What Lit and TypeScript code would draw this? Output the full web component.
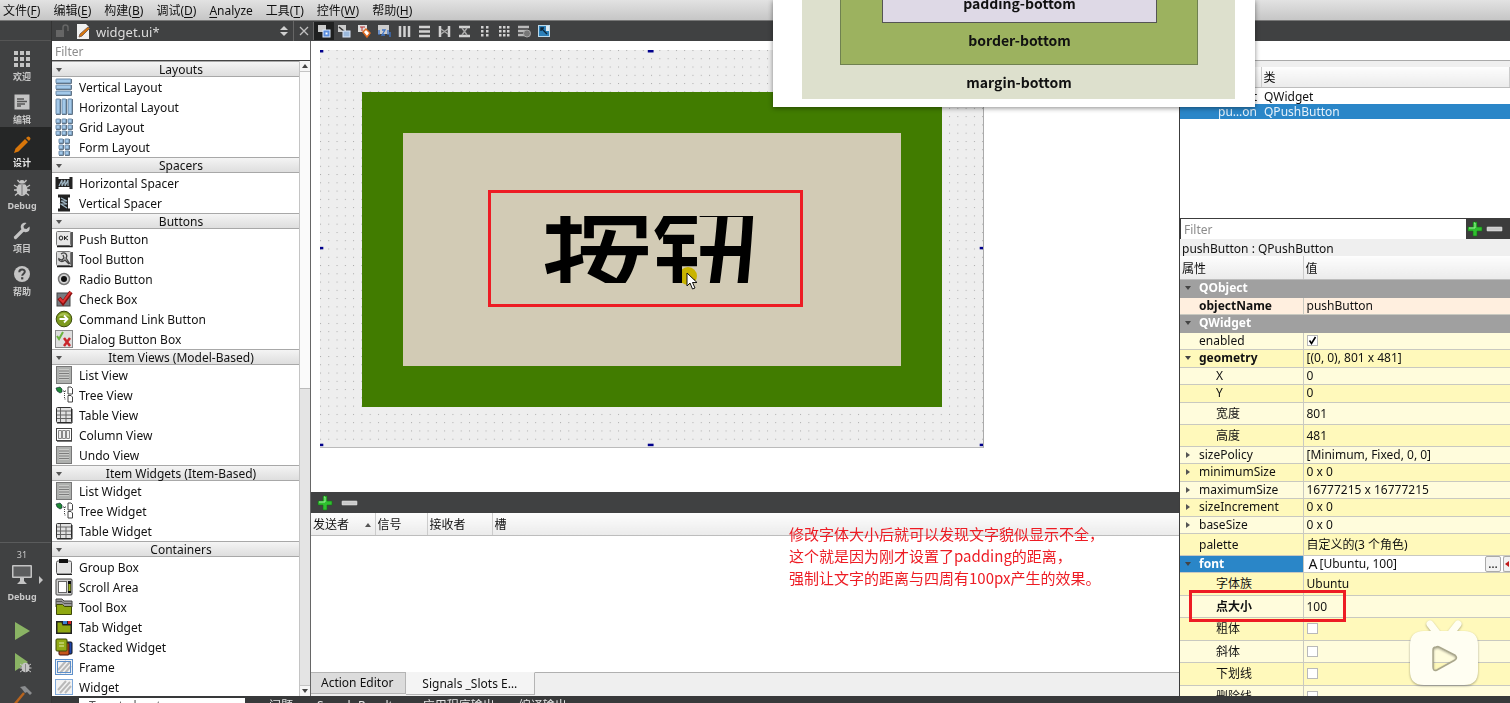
import { LitElement, html, css, svg, nothing, type TemplateResult } from "lit";
import { customElement, property } from "lit/decorators.js";
import { classMap } from "lit/directives/class-map.js";

/* ---------- icons ---------- */

const lines = svg`<path d="M4 5h10M4 7.5h10M4 10h10M4 12.500h10" stroke="#7c7c7c"/>`;
const treeIcon = svg`
  <path d="M1 2l4-1 2 2v3l-2 1-3-2z" fill="#1f8a35" stroke="#123" stroke-width=".6"/>
  <path d="M8 5h3M9.500 5v8h2" fill="none" stroke="#444" stroke-dasharray="1 1"/>
  <path d="M13 1h3l1.500 1.500V8H13zM13 9.500h3l1.500 1.500v5H13z" fill="#fff" stroke="#444"/>`;
const tableIcon = svg`
  <rect x="1.500" y="1.500" width="15" height="15" rx="1" fill="#e2e2e2" stroke="#333"/>
  <path d="M2 5h14M2 9h14M2 12.500h14M5.500 2v14M11 5v11" stroke="#666"/>
  <path d="M2 17h15V3" fill="none" stroke="#222"/>`;
const listIcon = svg`<rect x="1" y="0" width="16" height="18" fill="#aeb0ae"/><rect x="1.500" y=".5" width="15" height="17" fill="none" stroke="#777"/>
  <rect x="4" y="3" width="10" height="11" fill="#c9cac8"/>${lines}`;
const blueCell = (x: number, y: number, w: number, h: number) =>
  svg`<rect x=${x} y=${y} width=${w} height=${h} rx=".5" fill="#a4c9e9" stroke="#5f7f9f" stroke-width=".9"/>
    <path d=${`M${x} ${y + h + 0.5}h${w + 0.5}V${y}`} fill="none" stroke="#4b5f74" stroke-width=".8"/>`;
const hatch = (edge: string) => svg`
  <rect x=".5" y="1.500" width="17" height="15" fill="#f2f2f2" stroke=${edge}/>
  <path d="M3 12l8-9M5 15L15 4M10 15l6-7" stroke="#b9b9b9" stroke-width="2"/>`;

const ICONS: Record<string, unknown> = {
  vlayout: [blueCell(1, 1, 15, 4), blueCell(1, 7, 15, 4), blueCell(1, 13, 15, 4)],
  hlayout: [blueCell(1, 1, 4, 15), blueCell(7, 1, 4, 15), blueCell(13, 1, 4, 15)],
  grid: [1, 7, 13].map((y) => [1, 7, 13].map((x) => blueCell(x, y, 4, 4))),
  form: [1, 7, 13].map((y) => [4, 10].map((x) => blueCell(x, y, 4, 4))),
  hspacer: svg`<path d="M2 3v12M16 3v12" stroke="#222" stroke-width="3"/><rect x="3" y="5" width="12" height="8" fill="#222"/>
    <path d="M4 12l3-6v6l3-6v6l3-6v6" fill="none" stroke="#9fb6c4" stroke-width="1.200"/>`,
  vspacer: svg`<path d="M3 2h12M3 16h12" stroke="#222" stroke-width="3"/><path d="M5 3h8v12H5z" fill="#222"/>
    <path d="M6 4l6 3H6l6 3H6l6 4" fill="none" stroke="#9fb6c4" stroke-width="1.200"/>`,
  push: svg`<rect x="1.500" y="1.500" width="14" height="14" rx="1" fill="#e6e6e6" stroke="#777"/><path d="M2 16.500h15V2" fill="none" stroke="#222" stroke-width="1.500"/>
    <ellipse cx="6" cy="8" rx="1.800" ry="2" fill="none" stroke="#222"/><path d="M9.500 6v4M13 6l-3 2 3 2" fill="none" stroke="#222"/>`,
  tool: svg`<rect x="1.500" y="1.500" width="14" height="14" rx="1" fill="#dcdcdc" stroke="#777"/><path d="M2 16.500h15V2" fill="none" stroke="#222" stroke-width="1.500"/>
    <path d="M6 4c4-3 7 1 5 4l4 6M4 8c-1 3 3 5 6 2l4 4M8 5l1 3-2 2-3-1" fill="none" stroke="#444" stroke-width="1.300"/>`,
  radio: svg`<circle cx="9" cy="9" r="5.500" fill="#d6d6d6" stroke="#777" stroke-width="1.500"/><circle cx="9" cy="9" r="3" fill="#111"/>`,
  check: svg`<rect x="2" y="3" width="13" height="13" fill="#777b80" stroke="#444"/><path d="M4 8l4 5 8-11" fill="none" stroke="#8d1010" stroke-width="4"/><path d="M4.500 8.500L8 12l7.500-10" fill="none" stroke="#e23434" stroke-width="2"/>`,
  command: svg`<circle cx="9" cy="9" r="7.800" fill="#7d9b1e" stroke="#3d4d0c"/><path d="M3 7a6.500 6.500 0 0 1 12 0c-4-2-8-2-12 0z" fill="#a9c14f"/><path d="M4.500 9h8M9 5.500L12.500 9 9 12.500" fill="none" stroke="#fff" stroke-width="1.800"/>`,
  dialog: svg`<rect x=".5" y=".5" width="17" height="17" fill="#dedede" stroke="#8a8a8a"/><path d="M2 6l2 3 4-7" fill="none" stroke="#6cb33e" stroke-width="2"/><path d="M9 8l6 8M15 8l-6 8" stroke="#c9252b" stroke-width="2.500"/>`,
  list: listIcon,
  tree: treeIcon,
  table: tableIcon,
  column: svg`<rect x="1.500" y="2.500" width="15" height="12" fill="#fff" stroke="#444"/><path d="M3.500 4.500h3v8h-3zM7.500 4.500h3v8h-3zM11.500 4.500h3v8h-3z" fill="#eee" stroke="#888"/><path d="M2 15.500h15" stroke="#777"/>`,
  group: svg`<rect x="1.500" y="3" width="15" height="13" rx="1.500" fill="#e4e4e4" stroke="#555"/><path d="M2 16.500h15" stroke="#222"/><rect x="4" y="1" width="9" height="4" fill="#111"/>`,
  scroll: svg`<rect x="1" y="1" width="16" height="16" rx="1" fill="#cfcfcf" stroke="#444"/><rect x="3.500" y="3.500" width="8" height="11" fill="#fff" stroke="#666"/><rect x="13" y="3" width="3" height="12" fill="#111"/><rect x="13.500" y="6" width="2" height="7" fill="#9bb01c"/>`,
  toolbox: svg`<path d="M1 1h6l2 2h8v6H1z" fill="#999" stroke="#444"/><path d="M1 3.500h6l2 2h8" fill="none" stroke="#555"/><path d="M1.500 6.500h6l2 2h7v8h-15z" fill="#8fa811" stroke="#3d4807"/>`,
  tab: svg`<rect x="1" y="3" width="16" height="13" fill="#222"/><rect x="8" y="3" width="4" height="3" fill="#3f7fd0"/><rect x="13" y="3" width="3" height="3" fill="#d32020"/><path d="M2.500 4.500h4l1 3h8v7h-13z" fill="#8fa811"/>`,
  stacked: svg`<rect x="7" y="4" width="10" height="12" rx="1" fill="#1d46ac" stroke="#111"/><rect x="4" y="5" width="10" height="12" rx="1" fill="#c5561c" stroke="#411"/><rect x="1" y="1" width="11" height="12" rx="1" fill="#92aa17" stroke="#3d4807"/><path d="M4 5h5M4 8h5" stroke="#e2ebaa"/>`,
  frame: svg`${hatch("#5d8fca")}<rect x="2.500" y="3.500" width="13" height="11" fill="none" stroke="#5d8fca"/>`,
  widget: hatch("#7fa9da"),

  welcome: [1, 7, 13].map((y) => [1, 7, 13].map((x) => svg`<rect x=${x} y=${y} width="4" height="4" fill="#c4c4c4"/>`)),
  edit: svg`<rect x="1.500" y="1.500" width="15" height="15" fill="#c4c4c4"/><path d="M4 6h7M4 8.500h10M4 11h8M4 13h4" stroke="#555" stroke-width="1.400"/>`,
  design: svg`<path d="M1 17l1.500-4.500L12 3l3 3-9.500 9.500zM13 2l2-1.500c1.500 0 2.500 1 2.500 2.500L16 5z" fill="#d8760a"/>`,
  bug: svg`<ellipse cx="9" cy="10.500" rx="5.500" ry="6.500" fill="#c4c4c4"/><path d="M6 4a3 3 0 0 1 6 0z" fill="#c4c4c4"/>
    <path d="M6 3L4.500 1M12 3l1.500-2M4 8L1 6M14 8l3-2M4 11H1M14 11h3M5 14l-3 2.500M13 14l3 2.500" stroke="#c4c4c4" stroke-width="1.300"/><path d="M9 6v10M5 5h8" stroke="#606162" stroke-width=".8"/>`,
  wrench: svg`<path d="M2.500 15.500L10 8" stroke="#c4c4c4" stroke-width="3.200" stroke-linecap="round"/><path d="M16.500 4.500l-3 2.500-2.500-.5L10.500 4l3-3c-4-1-6.500 2-5.500 5.500l3.500 3.500c3.500 1 6-1.500 5-5.500z" fill="#c4c4c4"/>`,
  help: svg`<circle cx="9" cy="9" r="8" fill="#c4c4c4"/><path d="M6.300 7.200c0-3.500 5.500-3.500 5.500-.4 0 1.800-2.600 2-2.600 4" fill="none" stroke="#404142" stroke-width="2"/><rect x="8.100" y="12.200" width="2.200" height="2.200" fill="#404142"/>`,
  monitor: svg`<rect x="-1" y="0" width="20" height="13" rx="1" fill="#c4c4c4"/><rect x="0.500" y="1.500" width="17" height="10" fill="#5c5d5e"/><path d="M7 13h4v3l3 3H4l3-3z" fill="#c4c4c4"/>`,
  run: svg`<path d="M2 0v18l15-9z" fill="#8ab364"/>`,
  rundebug: svg`<path d="M2-1v18l6-4 7-5z" fill="#8ab364"/><ellipse cx="12.500" cy="13.500" rx="4" ry="4.800" fill="#c4c4c4"/><path d="M7 10l3 2M18 10l-3 2M6.500 14h12M7 18l3-2M18 18l-3-2" stroke="#c4c4c4"/><path d="M12.500 10v8" stroke="#777" stroke-width=".8"/>`,
  hammer: svg`<path d="M1 19L11 7" stroke="#b8641e" stroke-width="2.500"/><path d="M7 1l5-1 7 7-2 2-3-3-2 1-3-4z" fill="#8b8d8f"/>`,

  lock: svg`<rect x="2" y="8" width="8" height="7" fill="#666"/><path d="M9 8V5.500a2.500 2.500 0 0 1 5 0V9" fill="none" stroke="#666" stroke-width="1.500"/>`,
  doc: svg`<path d="M3 2h9l3 3v12H3z" fill="#f1f1f1"/><path d="M5 15l1-3 8-7 1.500 1.500L8 14z" fill="#d8760a" stroke="#865"/>`,
  plus: svg`<path d="M7 2h4v5h5v4h-5v5H7v-5H2V7h5z" fill="#2fbf2f" stroke="#157015" stroke-width=".6"/><path d="M8 3h1v5H3" fill="none" stroke="#9bf09b"/>`,
  minus: svg`<rect x="1" y="7" width="15" height="4" rx=".5" fill="#c9c9c9" stroke="#eee" stroke-width=".5"/>`,
  updown: svg`<path d="M9 4l4 4H5zM9 14l4-4H5z" fill="#d0d0d0"/>`,
  close: svg`<path d="M5 5l8 8M13 5l-8 8" stroke="#c0c0c0" stroke-width="1.300"/>`,

  eWidgets: svg`<rect x="3" y="3" width="8" height="7" fill="#ccc"/><rect x="8" y="8" width="7" height="7" fill="#5b8ede" stroke="#dce8fa"/><rect x="10.500" y="10.500" width="2" height="2" fill="#fff"/>`,
  eSignals: svg`<rect x="3" y="3" width="8" height="7" fill="#ccc"/><path d="M4 5l6 5" stroke="#333" stroke-width="1.500"/><rect x="8" y="9" width="7" height="6" fill="#9cb9dc" stroke="#dce8fa"/>`,
  eBuddies: svg`<rect x="3" y="3" width="9" height="7" fill="#ddd"/><path d="M5 5h5M7 5v4" stroke="#b33"/><path d="M8 10l3-3 4 4-3 4z" fill="#fff" stroke="#e06a20" stroke-width="1.500"/>`,
  eTab: svg`<rect x="3" y="3" width="11" height="9" fill="#ccc"/><path d="M4 8v5M7 8h3l-3 5h3M13 8v5M15 10v5" fill="none" stroke="#3f75c8" stroke-width="1.300"/>`,
  tH: svg`<path d="M5 4v11M9.500 4v11M14 4v11" stroke="#d2d2d2" stroke-width="2.500"/>`,
  tV: svg`<path d="M4 5h11M4 9.500h11M4 14h11" stroke="#d2d2d2" stroke-width="2.500"/>`,
  tHS: svg`<path d="M5 4v11M14 4v11" stroke="#d2d2d2" stroke-width="2.500"/><path d="M6 7l3.500 2.500L13 7M6 12l3.500-2.500L13 12" fill="none" stroke="#a8a8a8" stroke-width="1.500"/>`,
  tVS: svg`<path d="M4 5h11M4 14h11" stroke="#d2d2d2" stroke-width="2.500"/><path d="M7 6l2.500 3.500L7 13M12 6L9.500 9.500 12 13" fill="none" stroke="#a8a8a8" stroke-width="1.500"/>`,
  tF: [4, 8, 12].map((y) => [6, 11].map((x) => svg`<rect x=${x} y=${y} width="2.500" height="2.500" fill="#d2d2d2"/>`)),
  tG: [4, 8, 12].map((y) => [4, 8, 12].map((x) => svg`<rect x=${x} y=${y} width="2.500" height="2.500" fill="#d2d2d2"/>`)),
  tB: svg`<path d="M3 5h11M3 9h8M3 13h6" stroke="#bbb" stroke-width="2.500"/><circle cx="12" cy="11.500" r="3.500" fill="#777" stroke="#aaa"/>`,
  tA: svg`<rect x="3.500" y="3.500" width="11" height="11" fill="#2b7fb8" stroke="#bcd9ea"/><path d="M6 6l6 6M6 9V6h3" fill="none" stroke="#0b2538" stroke-width="1.400"/><rect x="11" y="4" width="3" height="5" fill="#dfeaf1"/>`,
};

const icon = (name: string): TemplateResult =>
  html`<svg class="icon" viewBox="0 0 18 18" aria-hidden="true">${ICONS[name]}</svg>`;

const shared = css`
  * { box-sizing: border-box; }
  button, input {
    font: inherit; color: inherit; margin: 0; padding: 0; border: 0; border-radius: 0;
    background: none; outline: none;
  }
  .icon { width: 18px; height: 18px; flex: none; display: block; overflow: visible; }
  table { border-collapse: collapse; width: 100%; table-layout: fixed; }
  td, th { padding: 0; text-align: left; font-weight: 400; white-space: nowrap; }
`;

/* ---------- mode selector ---------- */

@customElement("mode-bar")
export class ModeBar extends LitElement {
  static styles = [shared, css`
    :host {
      display: flex; flex-direction: column; width: 52px; flex: none; padding-top: 19px;
      background: #404142; color: #c8c8c8; overflow: hidden;
    }
    .modes { border-top: 1px solid #555; flex: 1; }
    button {
      display: flex; flex-direction: column; align-items: center; justify-content: flex-end; gap: 2px;
      width: 100%; height: 43px; padding: 0 8px 0 0; font-size: 9px; line-height: 14px; font-weight: 700;
    }
    .active { background: #252626; color: #e8e8e8; }
    .targets { border-top: 1px solid #5a5b5c; height: 161px; }
    .kit { height: 61px; gap: 4px; padding-bottom: 0; position: relative; }
    .kit .count { font-weight: 400; font-size: 9px; line-height: 12px; }
    .kit .icon { margin-bottom: 3px; }
    .kit::after {
      content: ""; position: absolute; left: 39px; top: 33px;
      border: 4px solid transparent; border-left-color: #c4c4c4; border-right: 0;
    }
    .action { height: 32px; justify-content: center; padding-bottom: 0; }
    .first { margin-top: 11px; }
  `];

  render() {
    const modes: [string, string][] = [
      ["welcome", "欢迎"], ["edit", "编辑"], ["design", "设计"],
      ["bug", "Debug"], ["wrench", "项目"], ["help", "帮助"],
    ];
    return html`
      <nav class="modes">
        ${modes.map(([i, label]) => html`
          <button class=${classMap({ active: i === "design" })}>${icon(i)}<span>${label}</span></button>`)}
      </nav>
      <div class="targets">
        <button class="kit"><span class="count">31</span>${icon("monitor")}<span>Debug</span></button>
        <button class="action first" aria-label="Run">${icon("run")}</button>
        <button class="action" aria-label="Start debugging">${icon("rundebug")}</button>
        <button class="action" aria-label="Build">${icon("hammer")}</button>
      </div>`;
  }
}

/* ---------- widget box ---------- */

const GROUPS: { title: string; items: [string, string][] }[] = [
  { title: "Layouts", items: [["vlayout", "Vertical Layout"], ["hlayout", "Horizontal Layout"], ["grid", "Grid Layout"], ["form", "Form Layout"]] },
  { title: "Spacers", items: [["hspacer", "Horizontal Spacer"], ["vspacer", "Vertical Spacer"]] },
  { title: "Buttons", items: [["push", "Push Button"], ["tool", "Tool Button"], ["radio", "Radio Button"], ["check", "Check Box"], ["command", "Command Link Button"], ["dialog", "Dialog Button Box"]] },
  { title: "Item Views (Model-Based)", items: [["list", "List View"], ["tree", "Tree View"], ["table", "Table View"], ["column", "Column View"], ["list", "Undo View"]] },
  { title: "Item Widgets (Item-Based)", items: [["list", "List Widget"], ["tree", "Tree Widget"], ["table", "Table Widget"]] },
  { title: "Containers", items: [["group", "Group Box"], ["scroll", "Scroll Area"], ["toolbox", "Tool Box"], ["tab", "Tab Widget"], ["stacked", "Stacked Widget"], ["frame", "Frame"], ["widget", "Widget"]] },
];

@customElement("widget-box")
export class WidgetBox extends LitElement {
  static styles = [shared, css`
    :host { display: flex; flex-direction: column; width: 259px; flex: none; background: #fff; border-right: 1px solid #666; }
    input { height: 20px; padding: 1px 3px 0; border-bottom: 1px solid #444; flex: none; }
    input::placeholder { color: #8c8c8c; }
    .body { display: flex; flex: 1; min-height: 0; }
    .list { flex: 1; overflow: hidden; }
    h3 {
      display: flex; align-items: center; height: 16px; margin: 0; padding: 1px 4px 0;
      font-size: 12px; line-height: 14px; font-weight: 400;
      border-top: 1px solid #a8a8a8; border-bottom: 1px solid #a8a8a8;
      background: linear-gradient(#f4f4f4, #dedede);
    }
    h3::before { content: ""; border: 3px solid transparent; border-top: 4px solid #555; border-bottom: 0; }
    h3 span { flex: 1; text-align: center; padding-left: 5px; }
    ul { list-style: none; margin: 0; padding: 0; }
    li { display: flex; align-items: center; gap: 6px; height: 20px; padding-left: 3px; }
    li span { padding-top: 1px; }
    .scrollbar { width: 11px; flex: none; display: flex; flex-direction: column; background: #e4e4e4; border-left: 1px solid #c4c4c4; }
    .scrollbar button { height: 11px; display: grid; place-items: center; background: #f6f6f6; border-bottom: 1px solid #c4c4c4; }
    .scrollbar button::before { content: ""; border: 3px solid transparent; border-top: 0; border-bottom: 4px solid #444; }
    .scrollbar .down { border-top: 1px solid #c4c4c4; border-bottom: 0; }
    .scrollbar .down::before { border-top: 4px solid #444; border-bottom: 0; }
    .thumb { flex: 317; background: #fafafa; border-bottom: 1px solid #bbb; }
    .rest { flex: 296; }
  `];

  render() {
    return html`
      <input type="text" placeholder="Filter" aria-label="Filter widgets" />
      <div class="body">
        <div class="list">
          ${GROUPS.map((g) => html`
            <section>
              <h3><span>${g.title}</span></h3>
              <ul>${g.items.map(([i, label]) => html`<li>${icon(i)}<span>${label}</span></li>`)}</ul>
            </section>`)}
        </div>
        <div class="scrollbar">
          <button aria-label="Scroll up"></button>
          <div class="thumb"></div><div class="rest"></div>
          <button class="down" aria-label="Scroll down"></button>
        </div>
      </div>`;
  }
}

/* ---------- form canvas ---------- */

@customElement("form-canvas")
export class FormCanvas extends LitElement {
  static styles = [shared, css`
    :host { display: block; flex: 1; min-height: 0; padding: 9px; background: #fff; overflow: hidden; }
    .form { position: relative; display: flex; width: 664px; height: 398px; background: #eee; border-right: 1px solid #aaa; border-bottom: 1px solid #bbb; }
    .grid { position: absolute; inset: 0; width: 100%; height: 100%; }
    .target {
      position: relative; flex: 1; margin: 42px 41px 40px 42px; padding: 83px;
      border: 41px solid #417c00; background: #d2cbb5; color: #000;
      font-size: 110px; line-height: 75px; font-weight: 500; display: grid; overflow: hidden;
    }
    .caption { height: 67px; overflow: hidden; text-align: center; white-space: nowrap; }
    .mark { position: absolute; left: 168px; top: 140px; width: 315px; height: 117px; border: 3px solid #ed1c24; }
    .halo { position: absolute; left: 359px; top: 217px; width: 18px; height: 18px; border-radius: 50%; background: #f4e200; mix-blend-mode: multiply; }
    .cursor { position: absolute; left: 366px; top: 222px; width: 12px; height: 18px; }
  `];

  render() {
    const handles = [[0, 0, 4], [396, 0, 7], [797, 0, 4], [0, 238, 4], [797, 238, 4], [0, 476, 4], [396, 476, 7], [797, 476, 4]];
    return html`
      <div class="form">
        <svg class="grid" viewBox="0 0 801 480" preserveAspectRatio="none" aria-hidden="true">
          <defs><pattern id="dots" width="10" height="10" patternUnits="userSpaceOnUse">
            <rect width="1.200" height="1.200" fill="#a8a8a8"/></pattern></defs>
          <rect width="801" height="480" fill="url(#dots)"/>
          ${handles.map(([x, y, w]) => svg`<rect x=${x} y=${y} width=${w} height="3" fill="#00008c"/>`)}
        </svg>
        <button class="target"><span class="caption">按钮</span></button>
        <div class="mark"></div>
        <div class="halo"></div>
        <svg class="cursor" viewBox="0 0 12 18" aria-hidden="true">
          <path d="M1 1v13l3-3 2.500 6 2.500-1-2.500-5.500H11z" fill="#fff" stroke="#111"/>
        </svg>
      </div>`;
  }
}

/* ---------- signal / slot editor ---------- */

@customElement("signal-editor")
export class SignalEditor extends LitElement {
  static styles = [shared, css`
    :host { position: relative; display: flex; flex-direction: column; height: 204px; flex: none; background: #fff; }
    .bar { display: flex; align-items: center; gap: 7px; height: 21px; padding-left: 5px; background: #404142; flex: none; }
    .bar button { height: 18px; }
    th { height: 22px; padding: 2px 0 0 2px; background: linear-gradient(#fdfdfd, #ebebeb); border-bottom: 1px solid #bdbdbd; border-right: 1px solid #ccc; }
    th:last-child { border-right: 0; }
    .sender { width: 64px; }
    .signal { width: 52px; }
    .receiver { width: 65px; }
    .head { display: flex; align-items: center; justify-content: space-between; padding-right: 4px; }
    .head::after { content: ""; border: 3px solid transparent; border-top: 0; border-bottom: 4px solid #555; }
    .space { flex: 1; }
    .tabs { display: flex; align-items: flex-start; height: 24px; flex: none; background: #efefef; }
    .tabs::after { content: ""; flex: 1; border-top: 1px solid #b0b0b0; }
    .tab { height: 22px; padding: 0 12px 0 10px; background: #dcdcdc; border: 1px solid #b4b4b4; border-left: 0; }
    .current { height: 23px; padding: 1px 17px 0 16px; background: #f4f4f4; border-top-color: #f4f4f4; }
    .note { position: absolute; left: 478px; top: 31px; margin: 0; font-size: 15px; line-height: 22px; color: #ed1c24; white-space: nowrap; font-family: "Noto Sans CJK SC", sans-serif; }
  `];

  render() {
    return html`
      <div class="bar">
        <button aria-label="Add connection">${icon("plus")}</button>
        <button aria-label="Remove connection">${icon("minus")}</button>
      </div>
      <table>
        <thead><tr>
          <th class="sender"><div class="head">发送者</div></th>
          <th class="signal">信号</th><th class="receiver">接收者</th><th>槽</th>
        </tr></thead>
      </table>
      <div class="space"></div>
      <div class="tabs">
        <button class="tab">Action Editor</button>
        <button class="tab current">Signals _Slots E…</button>
      </div>
      <p class="note">修改字体大小后就可以发现文字貌似显示不全，<br />这个就是因为刚才设置了padding的距离，<br />强制让文字的距离与四周有100px产生的效果。</p>`;
  }
}

/* ---------- object inspector and property editor ---------- */

interface Prop {
  name: string; value?: string; kind?: string; tall?: boolean; bold?: boolean;
  sub?: boolean; arrow?: "open" | "shut"; check?: boolean;
}

const PROPS: Prop[] = [
  { name: "QObject", kind: "group", arrow: "open" },
  { name: "objectName", value: "pushButton", kind: "peach", bold: true },
  { name: "QWidget", kind: "group", arrow: "open" },
  { name: "enabled", check: true, kind: "light" },
  { name: "geometry", value: "[(0, 0), 801 x 481]", bold: true, arrow: "open" },
  { name: "X", value: "0", sub: true, kind: "light" },
  { name: "Y", value: "0", sub: true },
  { name: "宽度", value: "801", sub: true, tall: true, kind: "light" },
  { name: "高度", value: "481", sub: true, tall: true },
  { name: "sizePolicy", value: "[Minimum, Fixed, 0, 0]", arrow: "shut", kind: "light" },
  { name: "minimumSize", value: "0 x 0", arrow: "shut" },
  { name: "maximumSize", value: "16777215 x 16777215", arrow: "shut", kind: "light" },
  { name: "sizeIncrement", value: "0 x 0", arrow: "shut" },
  { name: "baseSize", value: "0 x 0", arrow: "shut", kind: "light" },
  { name: "palette", value: "自定义的(3 个角色)", tall: true },
  { name: "font", value: "[Ubuntu, 100]", kind: "selected", arrow: "open", bold: true },
  { name: "字体族", value: "Ubuntu", sub: true, tall: true },
  { name: "点大小", value: "100", sub: true, tall: true, bold: true, kind: "light" },
  { name: "粗体", check: false, sub: true, tall: true },
  { name: "斜体", check: false, sub: true, tall: true, kind: "light" },
  { name: "下划线", check: false, sub: true, tall: true },
  { name: "删除线", check: false, sub: true, tall: true, kind: "light" },
];

@customElement("property-pane")
export class PropertyPane extends LitElement {
  @property({ attribute: false }) props: Prop[] = PROPS;

  static styles = [shared, css`
    :host { position: relative; display: flex; flex-direction: column; width: 331px; flex: none; overflow: hidden; background: #fff; border-left: 1px solid #3c3c3c; }
    input[type="text"] { width: 100%; height: 20px; padding: 1px 3px 0; background: #fff; }
    input::placeholder { color: #8c8c8c; }
    .inspector { height: 177px; flex: none; }
    .inspector input { border-bottom: 1px solid #aaa; display: block; }
    .inspector table { border-top: 6px solid #efefef; }
    .inspector th { height: 23px; padding: 3px 0 0 2px; background: linear-gradient(#fdfdfd, #ebebeb); border-bottom: 1px solid #bdbdbd; border-right: 1px solid #ccc; }
    .inspector td { height: 15px; line-height: 15px; padding-left: 3px; }
    .inspector tr:first-child td { height: 16px; padding-top: 1px; }
    .inspector .name { width: 81px; padding-right: 4px; text-align: right; }
    .inspector .chosen td { background: #2a86c8; color: #e6f1fa; }
    .bar { display: flex; align-items: center; height: 21px; flex: none; background: #3c3c3c; padding: 1px 0 1px 1px; }
    .bar input { flex: 1; min-width: 0; }
    .bar .tools { width: 44px; flex: none; display: flex; gap: 2px; overflow: hidden; }
    .subject { height: 17px; line-height: 17px; padding: 1px 0 0 2px; background: #efefef; flex: none; }
    .editor th { height: 23px; padding: 4px 0 0 2px; background: linear-gradient(#fdfdfd, #ebebeb); border-bottom: 1px solid #bdbdbd; }
    .prop { width: 123px; }
    .editor th.prop { border-right: 1px solid #ccc; }
    .editor td { height: 17px; line-height: 16px; padding-left: 19px; background: #fff9bb; border-bottom: 1px solid #c9c9c0; position: relative; }
    .editor tr:nth-child(odd) td { height: 18px; }
    .editor .prop { border-right: 1px solid #c9c9c0; }
    .editor td.val { padding-left: 3px; }
    .editor .light td { background: #fffcdc; }
    .editor .peach td { background: #ffefdf; }
    .editor .group td { background: #a0a0a0; color: #fff; font-weight: 700; border-color: #a0a0a0; }
    .editor .selected .prop { background: #2a86c8; color: #fff; }
    .editor .selected .val { background: #fff; }
    .editor tr.tall td { height: 22px; line-height: 21px; }
    .editor tr.tall:nth-child(2n + 17) td { height: 23px; line-height: 22px; }
    .editor td.sub { padding-left: 36px; }
    .bold { font-weight: 700; }
    .open::before, .shut::before { content: ""; position: absolute; left: 5px; top: 6px; border: 3px solid transparent; }
    .open::before { border-top: 4px solid #444; border-bottom: 0; }
    .shut::before { left: 6px; top: 5px; border-left: 4px solid #555; border-right: 0; }
    input[type="checkbox"] { appearance: none; display: block; width: 11px; height: 11px; background: #fff; border: 1px solid #b9b9b9; }
    input[type="checkbox"]:checked { background: #fff url("data:image/svg+xml,%3Csvg xmlns='http://www.w3.org/2000/svg' viewBox='0 0 9 9'%3E%3Cpath d='M1.500 4.500l2 3 4-6.500' fill='none' stroke='%23000' stroke-width='1.600'/%3E%3C/svg%3E"); }
    .font { display: flex; align-items: center; height: 16px; gap: 2px; padding-left: 2px; }
    .glyph { font-size: 14px; }
    .font .text { flex: 1; }
    .font button { width: 16px; height: 16px; line-height: 12px; text-align: center; background: #f2f2f2; border: 1px solid #aaa; border-radius: 2px; overflow: hidden; }
    .font .reset { display: grid; place-items: center; width: 7px; border-right: 0; border-radius: 2px 0 0 2px; }
    .font .reset::before { content: ""; border: 3px solid transparent; border-right: 4px solid #c01818; border-left: 0; }
    .mark { position: absolute; left: 9px; top: 549px; width: 157px; height: 32px; border: 3px solid #ed1c24; }
    .watermark { position: absolute; left: 228px; top: 578px; width: 72px; height: 70px; filter: drop-shadow(0 1px 1px #0005); }
  `];

  private value(p: Prop) {
    if (p.check !== undefined)
      return html`<input type="checkbox" aria-label=${p.name} .checked=${p.check} />`;
    if (p.kind === "selected")
      return html`<div class="font"><span class="glyph">A</span><span class="text">${p.value}</span>
        <button aria-label="Choose font">…</button><button class="reset" aria-label="Reset"></button></div>`;
    return p.value ?? nothing;
  }

  render() {
    return html`
      <div class="inspector">
        <input type="text" aria-label="Filter objects" />
        <table>
          <thead><tr><th class="name"></th><th>类</th></tr></thead>
          <tbody>
            <tr><td class="name">Widget</td><td>QWidget</td></tr>
            <tr class="chosen"><td class="name">pu…on</td><td>QPushButton</td></tr>
          </tbody>
        </table>
      </div>
      <div class="bar">
        <input type="text" placeholder="Filter" aria-label="Filter properties" />
        <div class="tools">
          <button aria-label="Add property">${icon("plus")}</button>
          <button aria-label="Remove property">${icon("minus")}</button>
        </div>
      </div>
      <div class="subject">pushButton : QPushButton</div>
      <table class="editor">
        <thead><tr><th class="prop">属性</th><th>值</th></tr></thead>
        <tbody>
          ${this.props.map((p) => html`
            <tr class=${classMap({ [p.kind ?? "deep"]: true, tall: !!p.tall })}>
              <td class=${classMap({ prop: true, sub: !!p.sub, bold: !!p.bold, open: p.arrow === "open", shut: p.arrow === "shut" })}>${p.name}</td>
              <td class="val">${this.value(p)}</td>
            </tr>`)}
        </tbody>
      </table>
      <div class="mark"></div>
      <svg class="watermark" viewBox="0 0 72 70" aria-hidden="true">
        <path d="M22 5l7 9M50 5l-7 9" stroke="#fffef2" stroke-width="7" stroke-linecap="round"/>
        <path fill-rule="evenodd" d="M16 12h40q14 0 14 14v26q0 14-14 14H16Q2 66 2 52V26Q2 12 16 12zM28 28q-3 0-3 3v17q0 5 4 3l18-10q3-2 0-5L31 28q-1-1-3 0z" fill="#fffef2"/>
        <path d="M28 28q-3 0-3 3v17q0 5 4 3l18-10q3-2 0-5L31 28q-1-1-3 0z" fill="none" stroke="#aaa78c" stroke-width="1.500"/>
      </svg>`;
  }
}

/* ---------- application ---------- */

@customElement("app-root")
export class AppRoot extends LitElement {
  static styles = [shared, css`
    :host {
      position: relative; display: flex; flex-direction: column; height: 100vh; overflow: hidden;
      font-family: "Noto Sans", "Noto Sans CJK SC", sans-serif; font-size: 12px; line-height: 16px; color: #111;
      background: #404142;
    }
    .menu { display: flex; gap: 13px; height: 21px; padding: 1px 3px 0; flex: none; background: linear-gradient(#e2e2e2, #c6c6c6); border-bottom: 1px solid #777; }
    .menu u { text-underline-offset: 2px; }
    .main { display: flex; flex: 1; min-height: 0; }
    .work { flex: 1; display: flex; flex-direction: column; min-width: 0; border-left: 1px solid #333; margin-left: -1px; }
    .tools { display: flex; align-items: center; height: 20px; flex: none; background: #404142; color: #ddd; }
    .file { display: flex; align-items: center; width: 242px; height: 20px; padding: 0 0 0 2px; gap: 2px; border-right: 1px solid #666; }
    .file .name { flex: 1; padding: 1px 0 0 2px; text-align: left; font-size: 13px; }
    .tools .shut { width: 20px; display: grid; place-items: center; border-right: 1px solid #666; }
    .tool { width: 20px; height: 18px; display: grid; place-items: center; }
    .on { background: #1f2020; }
    .panes { display: flex; flex: 1; min-height: 0; }
    .center { display: flex; flex-direction: column; flex: 1; min-width: 0; }
    .status { height: 7px; flex: none; overflow: hidden; background: #38393a; color: #e4e4e4; }
    .strip { display: flex; gap: 24px; height: 20px; align-items: center; padding-left: 27px; }
    .strip input { width: 166px; height: 16px; background: #fff; padding-left: 10px; color: #555; }
    .popup { position: absolute; left: 773px; top: 0; width: 482px; height: 107px; padding: 0 20px 8px 29px; background: #fff; box-shadow: 0 1px 5px #0007; font: 700 14px/20px "Noto Sans CJK SC", sans-serif; text-align: center; }
    .margin { height: 99px; padding: 0 37px 0 38px; background: #dde0cd; }
    .border { height: 65px; padding: 0 40px 0 41px; background: #9cb25f; border: 1px solid #6f8150; border-top: 0; }
    .padding { height: 23px; line-height: 7px; background: #ded9e6; border: 1px solid #555; border-top: 0; }
    .border p, .margin p { margin: 0; padding-top: 7px; }
  `];

  render() {
    const menus: [string, string, string][] = [
      ["文件(", "F", ")"], ["编辑(", "E", ")"], ["构建(", "B", ")"], ["调试(", "D", ")"],
      ["", "A", "nalyze"], ["工具(", "T", ")"], ["控件(", "W", ")"], ["帮助(", "H", ")"],
    ];
    const tools = ["eWidgets", "eSignals", "eBuddies", "eTab", "tH", "tV", "tHS", "tVS", "tF", "tG", "tB", "tA"];
    return html`
      <nav class="menu">
        ${menus.map(([a, k, b]) => html`<button>${a}<u>${k}</u>${b}</button>`)}
      </nav>
      <div class="main">
        <mode-bar></mode-bar>
        <div class="work">
          <div class="tools">
            <button class="file">${icon("lock")}${icon("doc")}<span class="name">widget.ui*</span>${icon("updown")}</button>
            <button class="shut" aria-label="Close">${icon("close")}</button>
            ${tools.map((t, n) => html`<button class=${classMap({ tool: true, on: n === 0 })} aria-label=${t}>${icon(t)}</button>`)}
          </div>
          <div class="panes">
            <widget-box></widget-box>
            <div class="center">
              <form-canvas></form-canvas>
              <signal-editor></signal-editor>
            </div>
            <property-pane></property-pane>
          </div>
          <div class="status">
            <div class="strip">
              <input type="text" value="Type to locate" aria-label="Locate" />
              <span>问题</span><span>Search Results</span><span>应用程序输出</span><span>编译输出</span>
            </div>
          </div>
        </div>
      </div>
      <div class="popup">
        <div class="margin">
          <div class="border">
            <div class="padding">padding-bottom</div>
            <p>border-bottom</p>
          </div>
          <p>margin-bottom</p>
        </div>
      </div>`;
  }
}
